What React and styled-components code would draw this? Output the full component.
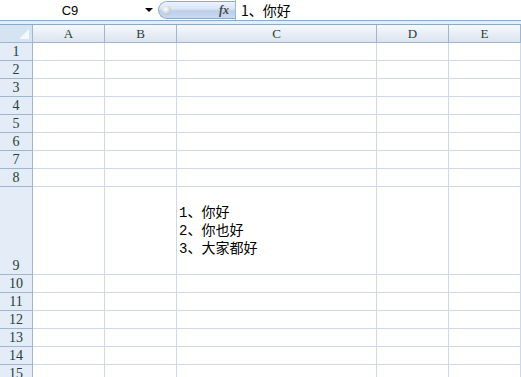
import React from 'react';
import styled, { createGlobalStyle } from 'styled-components';

const GlobalStyle = createGlobalStyle`
  html, body {
    margin: 0;
    padding: 0;
    background: #ffffff;
    overflow: hidden;
  }
`;

const Page = styled.div`
  width: 521px;
  height: 377px;
  overflow: hidden;
  font-family: "Liberation Serif", "Noto Sans CJK SC", serif;
`;

const FormulaBar = styled.div`
  display: flex;
  height: 20px;
  border-bottom: 1px solid #8eaacb;
  background: #ffffff;
`;

const NameBox = styled.div`
  width: 140px;
  display: flex;
  align-items: center;
  justify-content: center;
  font-family: "Liberation Sans", sans-serif;
  font-size: 13px;
  color: #000;
  padding-top: 1px;
`;

const DropArrow = styled.div`
  width: 18px;
  display: flex;
  align-items: center;
  justify-content: center;

  &::after {
    content: '';
    border-left: 4px solid transparent;
    border-right: 4px solid transparent;
    border-top: 4px solid #000;
  }
`;

const FxPill = styled.div`
  width: 77px;
  margin: 1px 0;
  display: flex;
  align-items: center;
  justify-content: space-between;
  box-sizing: border-box;
  border: 1px solid #8ea9cf;
  border-right: none;
  border-radius: 9px 0 0 9px;
  background: linear-gradient(#eef3fb 0%, #d9e4f4 45%, #bccfea 55%, #cbdaf0 100%);
  padding: 0 6px 0 3px;
`;

const Knob = styled.span`
  width: 9px;
  height: 9px;
  border-radius: 50%;
  background: radial-gradient(circle at 40% 35%, #ffffff 0%, #d2d8e1 50%, #a3adbb 100%);
`;

const FxLabel = styled.span`
  font-family: "Liberation Serif", serif;
  font-style: italic;
  font-weight: bold;
  font-size: 12px;
  color: #4a4a4a;
`;

const FormulaInput = styled.div`
  flex: 1;
  border-left: 1px solid #9fb5d3;
  padding-left: 5px;
  display: flex;
  align-items: center;
  font-family: "Noto Sans CJK SC", sans-serif;
  font-size: 14px;
  line-height: 18px;
  color: #000;
`;

const Strip = styled.div`
  height: 3px;
  background: #e6edf6;
  border-bottom: 1px solid #8eaacb;
`;

const Grid = styled.div`
  display: grid;
  grid-template-columns: 33px 72px 72px 200px 72px 72px;
  grid-template-rows: ${(p) => p.$rows};
`;

const Corner = styled.div`
  box-sizing: border-box;
  border-right: 1px solid #9eb6ce;
  border-bottom: 1px solid #9eb6ce;
  background: #d6e3f3;
  position: relative;

  &::after {
    content: '';
    position: absolute;
    right: 3px;
    bottom: 3px;
    border-left: 10px solid transparent;
    border-bottom: 10px solid #f4f7fb;
  }
`;

const ColHead = styled.div`
  box-sizing: border-box;
  border-right: 1px solid #9eb6ce;
  border-bottom: 1px solid #9eb6ce;
  background: linear-gradient(#f6f8fc 0%, #e9eef6 50%, #dbe4f0 100%);
  display: flex;
  align-items: center;
  justify-content: center;
  font-size: 13px;
  color: #23403c;
`;

const RowHead = styled.div`
  box-sizing: border-box;
  border-right: 1px solid #9eb6ce;
  border-bottom: 1px solid #9eb6ce;
  background: #e4ecf7;
  display: flex;
  align-items: flex-end;
  justify-content: center;
  font-size: 14px;
  line-height: 17px;
  color: #23403c;
`;

const Cell = styled.div`
  box-sizing: border-box;
  border-right: 1px solid #d0d7e5;
  border-bottom: 1px solid #d0d7e5;
  background: #ffffff;
  display: flex;
  flex-direction: column;
  justify-content: center;
  padding-left: 2px;
  font-family: "Liberation Mono", "Noto Sans CJK SC", monospace;
  font-size: 14px;
  line-height: 18px;
  color: #000;
  white-space: nowrap;
`;

const columns = ['A', 'B', 'C', 'D', 'E'];

const rows = [
  { n: 1 }, { n: 2 }, { n: 3 }, { n: 4 }, { n: 5 }, { n: 6 }, { n: 7 }, { n: 8 },
  { n: 9, h: 88, c: ['1、你好', '2、你也好', '3、大家都好'] },
  { n: 10 }, { n: 11 }, { n: 12 }, { n: 13 }, { n: 14 }, { n: 15 },
];

const rowTemplate = ['18px', ...rows.map((r) => `${r.h || 18}px`)].join(' ');

const App = () => {
  return (
    <Page>
      <GlobalStyle />
      <FormulaBar>
        <NameBox>C9</NameBox>
        <DropArrow />
        <FxPill>
          <Knob />
          <FxLabel>fx</FxLabel>
        </FxPill>
        <FormulaInput>1、你好</FormulaInput>
      </FormulaBar>
      <Strip />
      <Grid $rows={rowTemplate}>
        <Corner />
        {columns.map((c) => (
          <ColHead key={c}>{c}</ColHead>
        ))}
        {rows.map((r) => (
          <React.Fragment key={r.n}>
            <RowHead>{r.n}</RowHead>
            {columns.map((c) => (
              <Cell key={c}>
                {c === 'C' && r.c ? r.c.map((line) => <div key={line}>{line}</div>) : null}
              </Cell>
            ))}
          </React.Fragment>
        ))}
      </Grid>
    </Page>
  );
};

export default App;
